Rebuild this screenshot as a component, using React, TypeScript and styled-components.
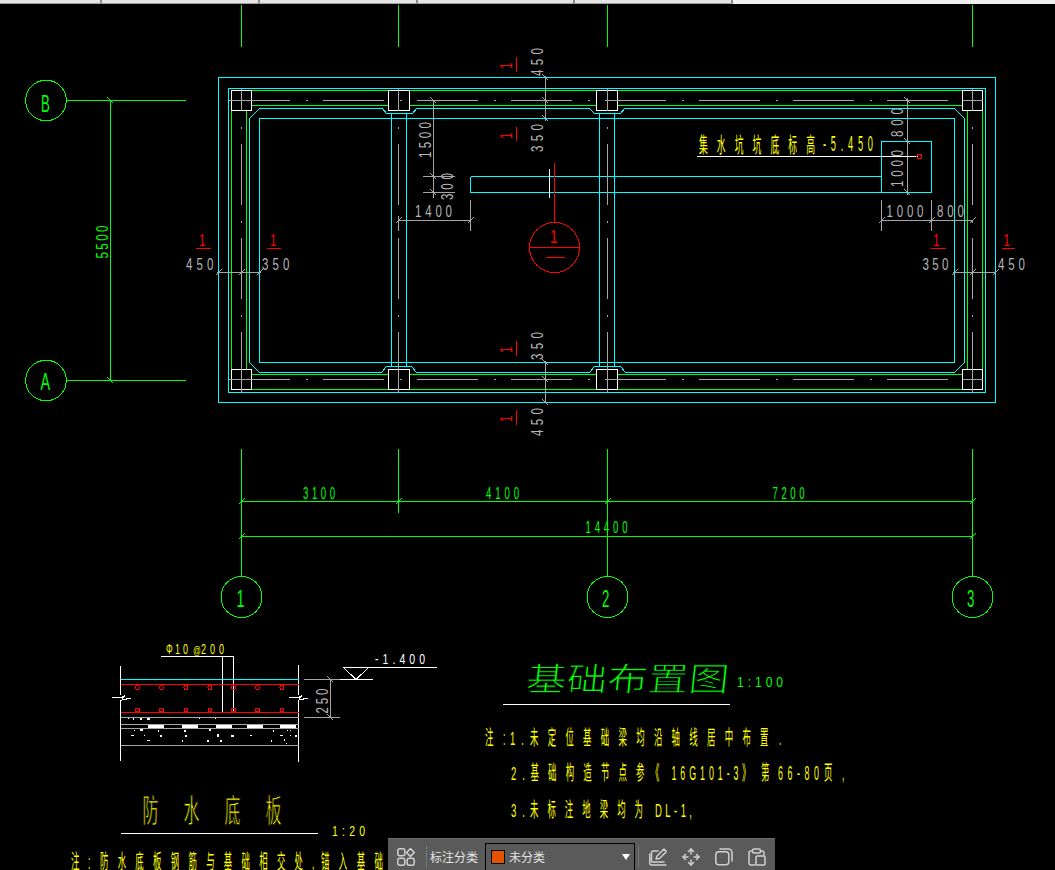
import React from "react";
import styled, { createGlobalStyle } from "styled-components";

const CYAN = "#00ffff";
const GREEN = "#00ff00";
const GRAY = "#a6a6a6";
const RED = "#ff0000";
const YELLOW = "#ffff00";
const WHITE = "#ffffff";
const DIM_TEXT = "#b4b4b4";

const GlobalStyle = createGlobalStyle`
	html, body {
		margin: 0;
		padding: 0;
		background: #000;
	}
`;

const Page = styled.div`
	width: 1055px;
	height: 870px;
	display: flex;
	flex-direction: column;
	overflow: hidden;
	background: #000;
`;

const TabStrip = styled.div`
	display: flex;
	flex: 0 0 4px;
	background: #f0f0f0;
`;

const Tab = styled.div<{ $w: number }>`
	flex: 0 0 ${(props) => props.$w}px;
	box-sizing: border-box;
	background: #e4e4e4;
	border-right: 2px solid #8a8a8a;
	border-bottom: 1px solid #a0a0a0;
`;

const Canvas = styled.div`
	position: relative;
	flex: 1 1 auto;
`;

const Sheet = styled.svg`
	display: block;
	width: 1055px;
	height: 866px;
`;

const Wire = styled.path`
	fill: none;
	stroke-width: 1;
	shape-rendering: crispEdges;
`;

const Round = styled.circle`
	fill: none;
	stroke-width: 1;
	shape-rendering: crispEdges;
`;

const Column = styled.rect`
	fill: #000;
	stroke: #fff;
	stroke-width: 1;
	shape-rendering: crispEdges;
`;

const CadLabel = styled.text`
	font-family: "Liberation Sans", "Noto Sans CJK SC", sans-serif;
	font-weight: 400;
`;

// the plan title is a thin outline font in the drawing, so the glyphs are eaten back a little
const ThinLabel = styled(CadLabel)`
	stroke: #000;
	stroke-width: 0.9;
`;

const Toolbar = styled.div`
	position: absolute;
	left: 388px;
	bottom: 0;
	width: 387px;
	height: 32px;
	box-sizing: border-box;
	padding: 4px 0 0 9px;
	display: flex;
	align-items: center;
	background: #5a5a5a;
	border-top: 1px solid #6c6c6c;
	font-family: "Noto Sans CJK SC", sans-serif;
	font-size: 12px;
	color: #e4e4e4;
`;

const ToolIcon = styled.svg<{ $gap?: number }>`
	flex: 0 0 18px;
	width: 18px;
	height: 18px;
	margin-left: ${(props) => props.$gap ?? 0}px;
	fill: none;
	stroke: #cfcfcf;
	stroke-width: 1.5;
	stroke-linecap: round;
	stroke-linejoin: round;
`;

const Divider = styled.div<{ $left: number }>`
	flex: 0 0 1px;
	height: 22px;
	margin-left: ${(props) => props.$left}px;
	background: #777;
`;

const ToolLabel = styled.span`
	margin: 0 7px 0 3px;
	white-space: nowrap;
`;

const Select = styled.div`
	flex: 0 0 150px;
	height: 28px;
	box-sizing: border-box;
	display: flex;
	align-items: center;
	padding-left: 5px;
	border: 1px solid #000;
`;

const Swatch = styled.span`
	flex: 0 0 14px;
	height: 14px;
	box-sizing: border-box;
	background: #e65100;
	border: 1px solid #000;
	margin-right: 4px;
`;

const Caret = styled.span`
	margin-left: auto;
	margin-right: 4px;
	border-left: 4.5px solid transparent;
	border-right: 4.5px solid transparent;
	border-top: 6px solid #fff;
`;

type CadProps = {
	x: number;
	y: number;
	w?: number;
	size: number;
	sx: number;
	rot?: number;
	skew?: number;
	fill: string;
	thin?: boolean;
	children: string;
};

// text placed in sheet coordinates: x,y is the baseline start, w the drawn width
const Cad = (props: CadProps) => {
	const { x, y, w, size, sx, rot = 0, skew = 0, fill, thin, children } = props;
	const Label = thin ? ThinLabel : CadLabel;
	return (
		<Label
			transform={`translate(${x} ${y}) rotate(${rot}) skewX(${skew}) scale(${sx} 1)`}
			fontSize={size}
			fill={fill}
			textLength={w ? w / sx : undefined}
			lengthAdjust="spacing"
		>
			{children}
		</Label>
	);
};

const back = (x: number, y: number) => `M${x - 3} ${y - 3}L${x + 3} ${y + 3}`;
const slash = (x: number, y: number) => `M${x - 3} ${y + 3}L${x + 3} ${y - 3}`;

const AXIS_X = [241.5, 398.5, 607.5, 972.5];
const COLUMN_X = [231.5, 388.5, 596.5, 962.5];
const COLUMN_W = [20, 21, 21, 20];
const COLUMN_Y = [90.5, 369.5];

const cyanPath = [
	"M218.5 77.5H995.5V402.5H218.5Z",
	"M228.5 88.5H985.5V392.5H228.5Z",
	"M249.5 118.5L259.5 108.5H382.5L386.5 113.5H412.5L416.5 108.5H589.5L594.5 113.5H620.5L624.5 108.5H954.5L964.5 118.5V362.5L954.5 372.5H625.5L620.5 366.5H594.5L589.5 372.5H416.5L411.5 366.5H386.5L381.5 372.5H259.5L249.5 362.5Z",
	"M259.5 118.5H954.5V362.5H259.5Z",
	"M391.5 113.5V366.5M406.5 113.5V366.5M599.5 113.5V366.5M614.5 113.5V366.5",
	"M470.5 176.5H881.5M470.5 176.5V192.5H931.5V141.5H881.5V192.5",
].join("");

const greenPlanPath =
	"M231.5 90.5H982.5V389.5H231.5ZM246.5 105.5H967.5V374.5H246.5Z";

const greenAxisPath = [
	"M66.5 100.5H185.5M66.5 380.5H185.5M110.5 100.5V380.5",
	back(110.5, 100.5),
	back(110.5, 380.5),
	...AXIS_X.map((x) => `M${x} 5V47`),
	"M241.5 449V576M398.5 449V513M607.5 449V576M972.5 449V576",
	"M241.5 501.5H972.5M241.5 536.5H972.5",
	...AXIS_X.map((x) => slash(x, 501.5)),
	slash(241.5, 536.5),
	slash(972.5, 536.5),
].join("");

const grayDimPath = [
	"M433.5 100.5V198M422.5 176.5H454.5M422.5 192.5H454.5",
	back(433.5, 100.5),
	back(433.5, 176.5),
	back(433.5, 192.5),
	"M398.5 220.5H470.5M398.5 216V231M470.5 200V231",
	slash(398.5, 220.5),
	slash(470.5, 220.5),
	"M907.5 98V195",
	back(907.5, 100.5),
	back(907.5, 141.5),
	back(907.5, 192.5),
	"M881.5 220.5H972.5M881.5 200V231M931.5 200V231",
	slash(881.5, 220.5),
	slash(931.5, 220.5),
	slash(972.5, 220.5),
	"M216.5 272.5H260.5",
	slash(218.5, 272.5),
	slash(241.5, 272.5),
	slash(259.5, 272.5),
	"M952.5 272.5H995.5",
	slash(954.5, 272.5),
	slash(972.5, 272.5),
	slash(995.5, 272.5),
	"M545.5 76V121",
	back(545.5, 77.5),
	back(545.5, 100.5),
	back(545.5, 118.5),
	"M545.5 361V403",
	back(545.5, 362.5),
	back(545.5, 379.5),
	back(545.5, 402.5),
].join("");

const redMarkPath =
	"M196 248.5H211M267 248.5H281M931 248.5H946M1002 248.5H1015" +
	"M516.5 57V72M516.5 127V141M516.5 341V356M516.5 410V425";

const REBAR_X = [137.5, 161.5, 186, 210, 233.5, 257.5, 282];

const BLOCKS = [
	[148, 164],
	[182, 198],
	[216, 232],
	[247, 263],
	[280, 296],
];

// gravel specks of the slab section
const SPECKS: [number, number, number, number][] = [
	[128, 718, 1, 1], [133, 718, 1, 2], [140, 718, 2, 2], [147, 718, 3, 2], [199, 718, 1, 1], [215, 718, 1, 1],
	[134, 730, 1, 1], [140, 729, 3, 2], [158, 730, 1, 2], [184, 730, 2, 2], [209, 729, 2, 2], [273, 730, 1, 2], [287, 730, 1, 1], [290, 730, 1, 1],
	[131, 735, 3, 1], [144, 735, 1, 1], [160, 735, 2, 2], [185, 735, 2, 2], [217, 734, 2, 3], [231, 735, 3, 2], [250, 735, 2, 1], [280, 735, 3, 1], [290, 735, 1, 1], [295, 735, 2, 2],
	[147, 740, 3, 1], [182, 740, 1, 2], [207, 740, 2, 2], [220, 740, 2, 2], [271, 740, 1, 2], [284, 739, 1, 2], [286, 743, 1, 1],
];

const Plan = () => (
	<>
		<Wire d={cyanPath} stroke={CYAN} />
		<Wire d={greenPlanPath} stroke={GREEN} />
		{COLUMN_Y.map((y) =>
			COLUMN_X.map((x, i) => (
				<Column key={`${x}-${y}`} x={x} y={y} width={COLUMN_W[i]} height={20} />
			))
		)}
		{[100.5, 379.5].map((y) => (
			<g key={y}>
				<Wire d={`M228.5 ${y}H948`} stroke={GRAY} strokeDasharray="61 16 2 15" />
				<Wire d={`M963 ${y}H983`} stroke={GRAY} />
			</g>
		))}
		{AXIS_X.map((x) => (
			<Wire
				key={x}
				d={`M${x} 88.5V392`}
				stroke={GRAY}
				strokeDasharray="61 16 2 15"
				strokeDashoffset={39}
			/>
		))}
	</>
);

const AxisBubbles = () => (
	<>
		<Wire d={greenAxisPath} stroke={GREEN} />
		<Round cx={46} cy={100.5} r={20.3} stroke={GREEN} />
		<Round cx={46} cy={380.5} r={20.3} stroke={GREEN} />
		<Cad x={41} y={111.5} size={24} sx={0.55} fill={GREEN}>B</Cad>
		<Cad x={40.5} y={389.5} size={24} sx={0.6} fill={GREEN}>A</Cad>
		{AXIS_X.filter((x) => x !== 398.5).map((x) => (
			<Round key={x} cx={x} cy={597} r={20.5} stroke={GREEN} />
		))}
		<Cad x={236.5} y={607} size={24} sx={0.6} fill={GREEN}>1</Cad>
		<Cad x={602} y={607} size={24} sx={0.55} fill={GREEN}>2</Cad>
		<Cad x={967} y={607} size={24} sx={0.55} fill={GREEN}>3</Cad>
		<Cad x={108} y={258.5} w={33} size={16} sx={0.72} rot={-90} fill={GREEN}>5500</Cad>
		<Cad x={303} y={499} w={32} size={16} sx={0.6} fill={GREEN}>3100</Cad>
		<Cad x={486} y={499} w={33} size={16} sx={0.6} fill={GREEN}>4100</Cad>
		<Cad x={772.5} y={499} w={32} size={16} sx={0.6} fill={GREEN}>7200</Cad>
		<Cad x={585.5} y={533} w={42} size={16} sx={0.6} fill={GREEN}>14400</Cad>
	</>
);

const PlanDimensions = () => (
	<>
		<Wire d={grayDimPath} stroke={GRAY} />
		<Cad x={431} y={158} w={36} size={16} sx={0.72} rot={-90} fill={DIM_TEXT}>1500</Cad>
		<Cad x={453} y={200} w={27} size={16} sx={0.72} rot={-90} fill={DIM_TEXT}>300</Cad>
		<Cad x={415} y={217} w={37} size={16} sx={0.72} fill={DIM_TEXT}>1400</Cad>
		<Cad x={903} y={137} w={29} size={16} sx={0.72} rot={-90} fill={DIM_TEXT}>800</Cad>
		<Cad x={903} y={187} w={37} size={16} sx={0.72} rot={-90} fill={DIM_TEXT}>1000</Cad>
		<Cad x={886.5} y={217} w={37} size={16} sx={0.72} fill={DIM_TEXT}>1000</Cad>
		<Cad x={937} y={217} w={27} size={16} sx={0.72} fill={DIM_TEXT}>800</Cad>
		<Cad x={186} y={270} w={27.5} size={16} sx={0.72} fill={DIM_TEXT}>450</Cad>
		<Cad x={262} y={270} w={27.5} size={16} sx={0.72} fill={DIM_TEXT}>350</Cad>
		<Cad x={922.5} y={270} w={26} size={16} sx={0.72} fill={DIM_TEXT}>350</Cad>
		<Cad x={998} y={270} w={27} size={16} sx={0.72} fill={DIM_TEXT}>450</Cad>
		<Cad x={543} y={76} w={28} size={16} sx={0.72} rot={-90} fill={DIM_TEXT}>450</Cad>
		<Cad x={543} y={152} w={28} size={16} sx={0.72} rot={-90} fill={DIM_TEXT}>350</Cad>
		<Cad x={543} y={360} w={28} size={16} sx={0.72} rot={-90} fill={DIM_TEXT}>350</Cad>
		<Cad x={543} y={436} w={28} size={16} sx={0.72} rot={-90} fill={DIM_TEXT}>450</Cad>
	</>
);

const SectionMarks = () => (
	<>
		<Wire d={redMarkPath} stroke={RED} />
		<Cad x={199} y={246} size={16} sx={0.72} fill={RED}>1</Cad>
		<Cad x={270} y={246} size={16} sx={0.72} fill={RED}>1</Cad>
		<Cad x={933} y={246} size={16} sx={0.72} fill={RED}>1</Cad>
		<Cad x={1003.5} y={246} size={16} sx={0.72} fill={RED}>1</Cad>
		<Cad x={512} y={69} size={16} sx={0.72} rot={-90} fill={RED}>1</Cad>
		<Cad x={512} y={139} size={16} sx={0.72} rot={-90} fill={RED}>1</Cad>
		<Cad x={512} y={353} size={16} sx={0.72} rot={-90} fill={RED}>1</Cad>
		<Cad x={512} y={422} size={16} sx={0.72} rot={-90} fill={RED}>1</Cad>
		<Round cx={554.5} cy={247.5} r={25} stroke={RED} />
		<Wire d="M529.5 247.5H579.5M545.5 257.5H564.5M554.5 163V222" stroke={RED} />
		<Wire d="M549.5 169V198" stroke={WHITE} />
		<Cad x={550} y={243} size={19} sx={0.72} fill={RED}>1</Cad>
		<Wire d="M697 156.5H918" stroke={WHITE} />
		<Round cx={919.5} cy={156.5} r={2.5} stroke={RED} />
		<Cad x={699} y={151.5} w={116} size={21} sx={0.42} fill={YELLOW}>集水坑坑底标高</Cad>
		<Cad x={823} y={151} w={50} size={22} sx={0.42} fill={YELLOW}>-5.450</Cad>
	</>
);

const SlabDetail = () => (
	<>
		<Wire
			d="M120.5 666V695M120.5 700V761M298.5 665V695M298.5 700V762M161 656.5H233.5V712M222.5 656.5V712"
			stroke={WHITE}
		/>
		<Wire
			d="M112 697.5H122L125 695L122 700L131 698M289 697.5H299L302 695L299 700L308 698"
			stroke={WHITE}
		/>
		<Wire d="M120.5 679.5H298.5" stroke={CYAN} />
		<Wire d="M120.5 684.5H298.5M120.5 712.5H298.5" stroke={RED} />
		<Wire
			d="M120.5 717.5H298.5M120.5 724.5H298.5M120.5 728.5H298.5M120.5 745.5H298.5M304 679.5H340M304 717.5H340M330.5 679.5V717.5"
			stroke={GRAY}
		/>
		<Wire d={back(330.5, 679.5) + back(330.5, 717.5)} stroke={GRAY} />
		{REBAR_X.map((x) => (
			<g key={x}>
				<Round cx={x} cy={687.5} r={2} stroke={RED} />
				<Round cx={x} cy={710} r={2} stroke={RED} />
			</g>
		))}
		{BLOCKS.map(([a, b]) => (
			<rect key={a} x={a} y={725} width={b - a} height={3} fill={WHITE} />
		))}
		{SPECKS.map(([x, y, w, h]) => (
			<rect key={`${x}-${y}`} x={x} y={y} width={w} height={h} fill={WHITE} />
		))}
		<Wire d="M343.5 667.5L356 679.5L368.5 667.5M343.5 667.5H436.5M340 679.5H372.5" stroke={WHITE} />
		<Cad x={166} y={654} w={8} size={14} sx={0.6} fill={YELLOW}>Φ</Cad>
		<Cad x={175} y={654} w={13} size={15} sx={0.6} fill={YELLOW}>10</Cad>
		<Cad x={193} y={654} w={8} size={11} sx={0.7} fill={YELLOW}>@</Cad>
		<Cad x={201} y={654} w={23} size={15} sx={0.6} fill={YELLOW}>200</Cad>
		<Cad x={375} y={664} w={50} size={15} sx={0.7} fill={WHITE}>-1.400</Cad>
		<Cad x={327.5} y={713.5} w={25} size={16} sx={0.72} rot={-90} fill={DIM_TEXT}>250</Cad>
		<Cad x={142.5} y={822} w={139} size={32} sx={0.5} fill={YELLOW} thin>防水底板</Cad>
		<Wire d="M121 833.5H317.5" stroke={WHITE} />
		<Cad x={332} y={836} w={33} size={15} sx={0.7} fill={YELLOW}>1:20</Cad>
		<Cad x={71} y={868.5} size={20} sx={0.42} fill={YELLOW}>注</Cad>
		<Cad x={88} y={868.5} size={20} sx={0.42} fill={YELLOW}>:</Cad>
		<Cad x={100} y={868.5} w={203} size={20} sx={0.42} fill={YELLOW}>防水底板钢筋与基础相交处</Cad>
		<Cad x={312} y={868.5} size={20} sx={0.42} fill={YELLOW}>,</Cad>
		<Cad x={321} y={868.5} w={62} size={20} sx={0.42} fill={YELLOW}>锚入基础</Cad>
	</>
);

const TitleBlock = () => (
	<>
		<Cad x={525} y={691} w={203} size={33} sx={1.23} skew={-6} fill={GREEN} thin>基础布置图</Cad>
		<Cad x={737} y={686.5} w={46} size={15} sx={0.8} fill={GREEN}>1:100</Cad>
		<Wire d="M503 704.5H730" stroke={WHITE} />

		<Cad x={485} y={745} size={20} sx={0.42} fill={YELLOW}>注</Cad>
		<Cad x={503} y={745} size={20} sx={0.42} fill={YELLOW}>:</Cad>
		<Cad x={510} y={745} w={14} size={19} sx={0.5} fill={YELLOW}>1.</Cad>
		<Cad x={530} y={745} w={238.5} size={20} sx={0.42} fill={YELLOW}>未定位基础梁均沿轴线居中布置</Cad>
		<Cad x={779} y={745} size={20} sx={0.42} fill={YELLOW}>.</Cad>

		<Cad x={511} y={779.5} w={14} size={19} sx={0.5} fill={YELLOW}>2.</Cad>
		<Cad x={530.5} y={779.5} w={114} size={20} sx={0.42} fill={YELLOW}>基础构造节点参</Cad>
		<Cad x={651} y={779.5} size={20} sx={0.42} fill={YELLOW}>《</Cad>
		<Cad x={671.5} y={779.5} w={67} size={21} sx={0.42} fill={YELLOW}>16G101-3</Cad>
		<Cad x={742} y={779.5} size={20} sx={0.42} fill={YELLOW}>》</Cad>
		<Cad x={761} y={779.5} size={20} sx={0.42} fill={YELLOW}>第</Cad>
		<Cad x={778} y={779.5} w={41} size={21} sx={0.42} fill={YELLOW}>66-80</Cad>
		<Cad x={824} y={779.5} size={20} sx={0.42} fill={YELLOW}>页</Cad>
		<Cad x={842} y={779.5} size={20} sx={0.42} fill={YELLOW}>,</Cad>

		<Cad x={511} y={817} w={14} size={19} sx={0.5} fill={YELLOW}>3.</Cad>
		<Cad x={530} y={817} w={113} size={20} sx={0.42} fill={YELLOW}>未标注地梁均为</Cad>
		<Cad x={655} y={817} w={37} size={19} sx={0.5} fill={YELLOW}>DL-1,</Cad>
	</>
);

export default function App() {
	return (
		<Page>
			<GlobalStyle />
			<TabStrip>
				<Tab $w={102} />
				<Tab $w={158} />
				<Tab $w={158} />
				<Tab $w={157} />
				<Tab $w={158} />
			</TabStrip>
			<Canvas>
				<Sheet viewBox="0 4 1055 866">
					<AxisBubbles />
					<Plan />
					<PlanDimensions />
					<SectionMarks />
					<SlabDetail />
					<TitleBlock />
				</Sheet>
				<Toolbar>
					<ToolIcon viewBox="0 0 18 18">
						<rect x="0.8" y="0.8" width="7" height="7" rx="2" />
						<path d="M13.4 0.6l3.9 3.9-3.9 3.9-3.9-3.9z" />
						<rect x="0.8" y="10.2" width="7" height="7" rx="2" />
						<rect x="10.2" y="10.2" width="7" height="7" rx="2" />
					</ToolIcon>
					<Divider $left={11} />
					<ToolLabel>标注分类</ToolLabel>
					<Select>
						<Swatch />
						未分类
						<Caret />
					</Select>
					<Divider $left={3} />
					<ToolIcon viewBox="0 0 18 18" $gap={10}>
						<path d="M9 3H4a1.5 1.5 0 0 0-1.5 1.5V13a1 1 0 0 0 1 1H15" />
						<path d="M0.8 6v9.5a1.5 1.5 0 0 0 1.5 1.5H17" />
						<path d="M7 11l1-3 7-7 2.5 2.5-7 7z" />
					</ToolIcon>
					<ToolIcon viewBox="0 0 18 18" $gap={15}>
						<path d="M9 1v5M9 12v5M1 9h5M12 9h5" />
						<path d="M6.5 3.5L9 1l2.5 2.5M6.5 14.5L9 17l2.5-2.5M3.5 6.5L1 9l2.5 2.5M14.5 6.5L17 9l-2.5 2.5" />
					</ToolIcon>
					<ToolIcon viewBox="0 0 18 18" $gap={15}>
						<rect x="0.8" y="3.8" width="13" height="13" rx="3" />
						<path d="M5 1h8.5a3.5 3.5 0 0 1 3.5 3.5V13" />
					</ToolIcon>
					<ToolIcon viewBox="0 0 18 18" $gap={15}>
						<path d="M4.5 3H3a2 2 0 0 0-2 2v10a2 2 0 0 0 2 2h4" />
						<rect x="4.5" y="1" width="8" height="4" rx="1.5" />
						<path d="M12.5 3H14a2 2 0 0 1 2 2v2" />
						<rect x="8" y="8" width="9" height="9" rx="1" />
					</ToolIcon>
				</Toolbar>
			</Canvas>
		</Page>
	);
}
